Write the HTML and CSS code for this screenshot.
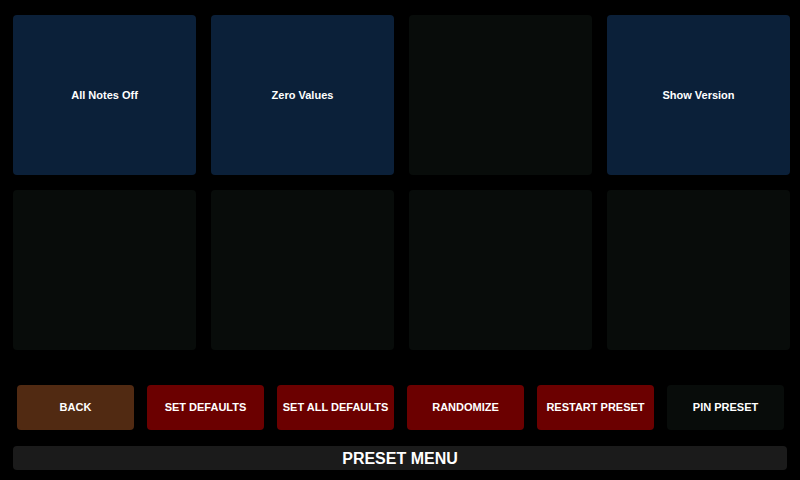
FILE: index.html
```html
<!DOCTYPE html>
<html lang="en">
<head>
<meta charset="UTF-8">
<meta name="viewport" content="width=device-width, initial-scale=1.0">
<title>Preset Menu</title>
<link rel="stylesheet" href="styles.css">
</head>
<body>

<div id="screen">
  <div class="pad_grid">
    <div class="pad pad_action">All Notes Off</div>
    <div class="pad pad_action">Zero Values</div>
    <div class="pad"></div>
    <div class="pad pad_action">Show Version</div>
    <div class="pad"></div>
    <div class="pad"></div>
    <div class="pad"></div>
    <div class="pad"></div>
  </div>

  <div class="button_row">
    <button class="menu_btn btn_back">BACK</button>
    <button class="menu_btn btn_red">SET DEFAULTS</button>
    <button class="menu_btn btn_red">SET ALL DEFAULTS</button>
    <button class="menu_btn btn_red">RANDOMIZE</button>
    <button class="menu_btn btn_red">RESTART PRESET</button>
    <button class="menu_btn btn_dark">PIN PRESET</button>
  </div>

  <div class="title_bar">PRESET MENU</div>
</div>

</body>
</html>
```

FILE: styles.css
```css
body {
  font-family: "Liberation Sans", Arial, sans-serif;
  background-color: #000;
  color: #fff;
  margin: 0;
  padding: 0;
}

#screen {
  width: 800px;
  height: 480px;
  display: flex;
  flex-direction: column;
}

.pad_grid {
  display: grid;
  grid-template-columns: repeat(4, 183px);
  grid-template-rows: repeat(2, 160px);
  gap: 15px;
  padding: 15px 0 0 13px;
}

.pad {
  background-color: #080c0a;
  border-radius: 4px;
  display: flex;
  justify-content: center;
  align-items: center;
  font-size: 11px;
  font-weight: bold;
}

.pad_action {
  background-color: #0b2039;
}

.button_row {
  display: flex;
  gap: 13px;
  padding-left: 17px;
  margin-top: 35px;
}

.menu_btn {
  width: 117px;
  height: 45px;
  padding: 0 0 2px 0;
  border: none;
  border-radius: 4px;
  color: #fff;
  font-family: "Liberation Sans", Arial, sans-serif;
  font-size: 11px;
  font-weight: bold;
  cursor: pointer;
}

.btn_back {
  background-color: #512a12;
}

.btn_red {
  background-color: #6b0000;
}

.btn_dark {
  background-color: #080c0a;
}

.title_bar {
  margin: 16px 0 0 13px;
  padding-top: 2px;
  box-sizing: border-box;
  width: 774px;
  height: 24px;
  background-color: #1b1b1b;
  border-radius: 4px;
  display: flex;
  justify-content: center;
  align-items: center;
  font-size: 16px;
  font-weight: bold;
}
```
